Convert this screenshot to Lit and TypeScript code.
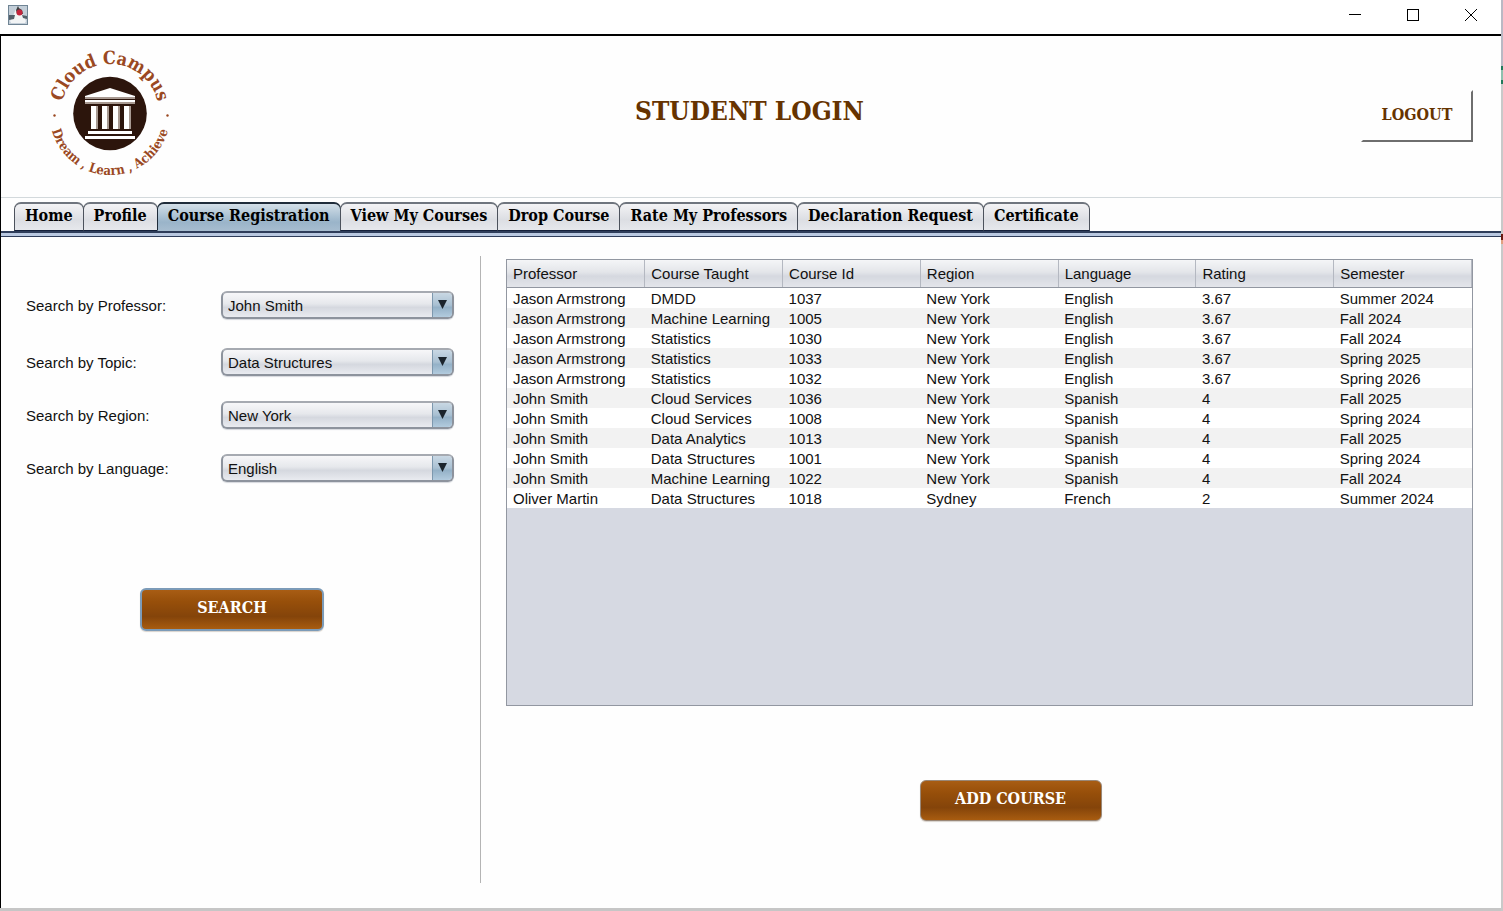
import { LitElement, html, css, svg } from "lit";
import { customElement, property, state } from "lit/decorators.js";
import { classMap } from "lit/directives/class-map.js";

const TABS = [
  "Home",
  "Profile",
  "Course Registration",
  "View My Courses",
  "Drop Course",
  "Rate My Professors",
  "Declaration Request",
  "Certificate",
];

const COLUMNS = ["Professor", "Course Taught", "Course Id", "Region", "Language", "Rating", "Semester"];

const COURSES = [
  ["Jason Armstrong", "DMDD", "1037", "New York", "English", "3.67", "Summer 2024"],
  ["Jason Armstrong", "Machine Learning", "1005", "New York", "English", "3.67", "Fall 2024"],
  ["Jason Armstrong", "Statistics", "1030", "New York", "English", "3.67", "Fall 2024"],
  ["Jason Armstrong", "Statistics", "1033", "New York", "English", "3.67", "Spring 2025"],
  ["Jason Armstrong", "Statistics", "1032", "New York", "English", "3.67", "Spring 2026"],
  ["John Smith", "Cloud Services", "1036", "New York", "Spanish", "4", "Fall 2025"],
  ["John Smith", "Cloud Services", "1008", "New York", "Spanish", "4", "Spring 2024"],
  ["John Smith", "Data Analytics", "1013", "New York", "Spanish", "4", "Fall 2025"],
  ["John Smith", "Data Structures", "1001", "New York", "Spanish", "4", "Spring 2024"],
  ["John Smith", "Machine Learning", "1022", "New York", "Spanish", "4", "Fall 2024"],
  ["Oliver Martin", "Data Structures", "1018", "Sydney", "French", "2", "Summer 2024"],
];

const FILTERS = [
  { id: "professor", label: "Search by Professor:", value: "John Smith" },
  { id: "topic", label: "Search by Topic:", value: "Data Structures" },
  { id: "region", label: "Search by Region:", value: "New York" },
  { id: "language", label: "Search by Language:", value: "English" },
];

@customElement("campus-logo")
class CampusLogo extends LitElement {
  static styles = css`
    :host {
      display: block;
    }
    .logo {
      display: block;
      width: 128px;
      height: 132px;
    }
    .ring {
      font-family: "DejaVu Serif Condensed", "DejaVu Serif", serif;
      font-weight: 700;
      fill: #9a4822;
    }
    .name {
      font-size: 18px;
    }
    .motto {
      font-size: 13px;
    }
  `;

  render() {
    const columns = [91, 102, 113, 124];
    return html`
      <svg class="logo" viewBox="46 47 128 132" role="img" aria-label="Cloud Campus">
        <defs>
          <path id="upper" d="M61 113a49 49 0 0 1 98 0" />
          <path id="lower" d="M50 115a60 60 0 0 0 120 0" />
        </defs>
        <circle cx="110" cy="113.500" r="36.800" fill="#2c150c" />
        <path d="M110 88l25 8v1H85v-1z" fill="#fff" />
        <path d="M85 97h50v2H85z" fill="#a89a92" />
        <path d="M85 100h50v2H85z" fill="#fff" />
        <path d="M85 102h50v2H85z" fill="#a89a92" />
        ${columns.map(
          (x) => svg`
            <path d="M${x} 106h6v23h-6z" fill="#fff" />
            <path d="M${x + 5} 106h2v23h-2z" fill="#a89a92" />`
        )}
        <path d="M88 131h44v3H88zM85 136h50v3H85z" fill="#fff" />
        <circle cx="54.500" cy="115.500" r="1.200" fill="#9a4822" />
        <circle cx="167.500" cy="115.500" r="1.200" fill="#9a4822" />
        <text class="ring name" text-anchor="middle">
          <textPath href="#upper" startOffset="50%">Cloud Campus</textPath>
        </text>
        <text class="ring motto" text-anchor="middle">
          <textPath href="#lower" startOffset="50%">Dream , Learn , Achieve</textPath>
        </text>
      </svg>
    `;
  }
}

@customElement("filter-field")
class FilterField extends LitElement {
  @property() name = "";
  @property() label = "";
  @property() value = "";

  static styles = css`
    :host {
      display: block;
    }
    .field {
      display: grid;
      grid-template-columns: 195px minmax(0, 233px);
      align-items: center;
    }
    .caption {
      padding-top: 2px;
    }
    .combo {
      display: grid;
      grid-template-columns: minmax(0, 1fr) 20px;
      height: 28px;
      box-sizing: border-box;
      border: 2px solid #8d939d;
      border-top-color: #a6aab1;
      border-radius: 6px;
      box-shadow: 0 1px 1px #d5d8dd;
      overflow: hidden;
      background: linear-gradient(#f7f7f9, #e6e8ec 45%, #d5d8df 60%, #e9ebf0);
    }
    .select {
      grid-area: 1 / 1 / 2 / 3;
      appearance: none;
      border: 0;
      margin: 0;
      padding: 2px 24px 0 5px;
      background: none;
      font: inherit;
      color: inherit;
      outline: none;
    }
    .arrow {
      grid-area: 1 / 2;
      display: flex;
      justify-content: center;
      align-items: center;
      padding-bottom: 2px;
      border-left: 1px solid #7d98ae;
      background: linear-gradient(#c9d8e4, #a9c0d2 50%, #94b1c7 60%, #b2cbde);
      pointer-events: none;
    }
    .glyph {
      width: 9px;
      height: 9px;
    }
  `;

  render() {
    return html`
      <div class="field">
        <label class="caption" for=${this.name}>${this.label}</label>
        <div class="combo">
          <select class="select" id=${this.name}>
            <option selected>${this.value}</option>
          </select>
          <span class="arrow">
            <svg class="glyph" viewBox="0 0 9 9"><path d="M0 0h9L4.500 9z" fill="#1b242c" /></svg>
          </span>
        </div>
      </div>
    `;
  }
}

@customElement("app-root")
class AppRoot extends LitElement {
  @state() private active = "Course Registration";

  static styles = css`
    :host {
      display: grid;
      grid-template-columns: minmax(0, 1fr) 2px;
      min-height: 100vh;
      background: #fefefe;
      color: #111;
      font: 15px/20px "Liberation Sans", Arial, sans-serif;
    }
    .window {
      display: flex;
      flex-direction: column;
      border-bottom: 3px solid #c6c6c6;
    }
    .edge {
      background: linear-gradient(
        #b9b9c4 0 66px,
        #217a5b 66px 70px,
        #8fc0ae 70px 80px,
        #217a5b 80px 84px,
        #c9c9c9 84px 234px,
        #6b1a12 234px 240px,
        #e0a080 240px 244px,
        #c9c9c9 244px
      );
    }
    .titlebar {
      display: flex;
      justify-content: space-between;
      align-items: center;
      box-sizing: border-box;
      height: 36px;
      padding: 0 16px 4px 8px;
      border-bottom: 2px solid #000;
      background: #fff;
    }
    .app-icon {
      width: 20px;
      height: 20px;
    }
    .controls {
      display: flex;
      gap: 30px;
    }
    .control {
      padding: 0 8px;
      margin: 0 -1px;
      border: 0;
      background: none;
    }
    .control-icon {
      display: block;
      width: 14px;
      height: 14px;
    }
    .frame {
      flex: 1;
      display: flex;
      flex-direction: column;
      border-left: 1px solid #000;
    }
    .header {
      display: grid;
      grid-template-columns: 1fr auto 1fr;
      align-items: center;
      box-sizing: border-box;
      height: 162px;
      padding: 0 28px 8px 45px;
      border-bottom: 1px solid #d3d9dc;
    }
    .title {
      margin: 0;
      padding: 0 20px 4px 0;
      font: 700 26px/36px "DejaVu Serif Condensed", "DejaVu Serif", serif;
      color: #663300;
    }
    .logout {
      justify-self: end;
      width: 112px;
      height: 52px;
      margin-top: 6px;
      padding: 0 0 2px;
      border: 2px solid #fefefe;
      border-right-color: #6e6e6e;
      border-bottom-color: #6e6e6e;
      background: none;
      font: 700 16px/20px "DejaVu Serif Condensed", "DejaVu Serif", serif;
      color: #663300;
    }
    .tabs {
      display: flex;
      padding: 4px 0 0 13px;
    }
    .tab {
      height: 29px;
      margin: 0 0 0 -1px;
      padding: 0 10px 2px;
      border: 1px solid #4c525c;
      border-width: 2px 1px 1px;
      border-top-color: #6f757e;
      border-bottom-color: #14203a;
      border-radius: 7px 7px 0 0;
      background: linear-gradient(#f3f3f5, #dcdee3 60%, #e6e8ec);
      font: 700 16px/20px "DejaVu Serif Condensed", "DejaVu Serif", serif;
      color: #000;
      white-space: nowrap;
    }
    .tab:first-child {
      margin-left: 0;
    }
    .tab--active {
      border-color: #1f2c3a;
      border-bottom-color: #a6bccf;
      background: linear-gradient(#d3dfe8, #a9c0d2 50%, #9ab4c9 70%, #a6bccf);
    }
    .rail {
      height: 3px;
      border: solid #2e3d5a;
      border-width: 2px 0 1px;
      background: #b9c8e0;
    }
    .content {
      flex: 1;
      display: grid;
      grid-template-columns: 480px minmax(0, 1fr);
    }
    .search {
      display: flex;
      flex-direction: column;
      margin: 19px 0 25px;
      padding: 35px 26px 0 25px;
      border-right: 1px solid #b4b4b4;
    }
    .filter {
      margin-bottom: 25px;
    }
    .filter:first-child {
      margin-bottom: 29px;
    }
    .results {
      display: flex;
      flex-direction: column;
      align-items: center;
      padding: 22px 28px 87px 25px;
    }
    .viewport {
      flex: 1;
      align-self: stretch;
      border: 1px solid #9297a1;
      background: #d6d9e2;
      overflow: auto;
    }
    .table {
      width: 100%;
      border-collapse: collapse;
      table-layout: fixed;
      background: #fff;
    }
    .head {
      height: 27px;
      padding: 0 0 0 6px;
      border-bottom: 1px solid #9297a1;
      border-right: 1px solid #b4b8c1;
      background: linear-gradient(#f4f5f7, #e3e5e9 45%, #d5d8df 60%, #e3e5ea);
      font-weight: 400;
      text-align: left;
    }
    .row:nth-child(even) {
      background: #f2f2f2;
    }
    .cell {
      box-sizing: border-box;
      height: 20px;
      padding: 2px 0 0 6px;
      line-height: 18px;
      white-space: nowrap;
    }
    .action {
      width: 182px;
      height: 41px;
      padding: 0 0 4px;
      border: 1px solid #9a8878;
      border-radius: 6px;
      background: linear-gradient(#a85d14, #974f0a 30%, #84440a 68%, #a85c10);
      box-shadow: 0 1px 1px #d8d2cc;
      font: 700 16px/20px "DejaVu Serif Condensed", "DejaVu Serif", serif;
      color: #fff;
    }
    .action--search {
      width: 184px;
      height: 43px;
      border: 2px solid #7c9bb8;
      margin: 81px 0 0 114px;
    }
    .action--add {
      margin: 74px 0 0 42px;
    }
  `;

  render() {
    return html`
      <div class="window">
        <div class="titlebar">
          <svg class="app-icon" viewBox="0 0 20 20" aria-hidden="true">
            <rect x=".5" y=".5" width="19" height="19" fill="#c3ced8" stroke="#6f8494" />
            <path d="M2 16l3-5 3-7 3-2 3 4 2 6 2 4-1 2H3z" fill="#f2f4f5" />
            <path d="M1 10l6 0-1 4-5 1zM14 10l5 1v3l-4-1z" fill="#53606a" />
            <path d="M8 5l2-4 1 2 3 2 1 4-3 1-3-1z" fill="#3c3f40" />
            <circle cx="11.500" cy="7.500" r="3" fill="#c4243c" />
          </svg>
          <div class="controls">
            <button class="control" aria-label="Minimize">
              <svg class="control-icon" viewBox="0 0 14 14"><path d="M1 6.500h12" stroke="#000" /></svg>
            </button>
            <button class="control" aria-label="Maximize">
              <svg class="control-icon" viewBox="0 0 14 14">
                <rect x="1.500" y="1.500" width="11" height="11" fill="none" stroke="#000" />
              </svg>
            </button>
            <button class="control" aria-label="Close">
              <svg class="control-icon" viewBox="0 0 14 14">
                <path d="M1 1l12 12M13 1L1 13" stroke="#000" fill="none" />
              </svg>
            </button>
          </div>
        </div>
        <div class="frame">
          <header class="header">
            <campus-logo></campus-logo>
            <h1 class="title">STUDENT LOGIN</h1>
            <button class="logout">LOGOUT</button>
          </header>
          <nav class="tabs" role="tablist">
            ${TABS.map(
              (tab) => html`<button
                class=${classMap({ tab: true, "tab--active": tab === this.active })}
                role="tab"
                aria-selected=${tab === this.active}
                @click=${() => (this.active = tab)}
              >${tab}</button>`
            )}
          </nav>
          <div class="rail"></div>
          <main class="content">
            <form class="search" @submit=${(e: Event) => e.preventDefault()}>
              ${FILTERS.map(
                (f) => html`<filter-field class="filter" name=${f.id} label=${f.label} value=${f.value}></filter-field>`
              )}
              <button class="action action--search">SEARCH</button>
            </form>
            <section class="results">
              <div class="viewport">
                <table class="table">
                  <thead>
                    <tr>${COLUMNS.map((c) => html`<th class="head" scope="col">${c}</th>`)}</tr>
                  </thead>
                  <tbody>
                    ${COURSES.map(
                      (row) => html`<tr class="row">${row.map((v) => html`<td class="cell">${v}</td>`)}</tr>`
                    )}
                  </tbody>
                </table>
              </div>
              <button class="action action--add">ADD COURSE</button>
            </section>
          </main>
        </div>
      </div>
      <div class="edge"></div>
    `;
  }
}
